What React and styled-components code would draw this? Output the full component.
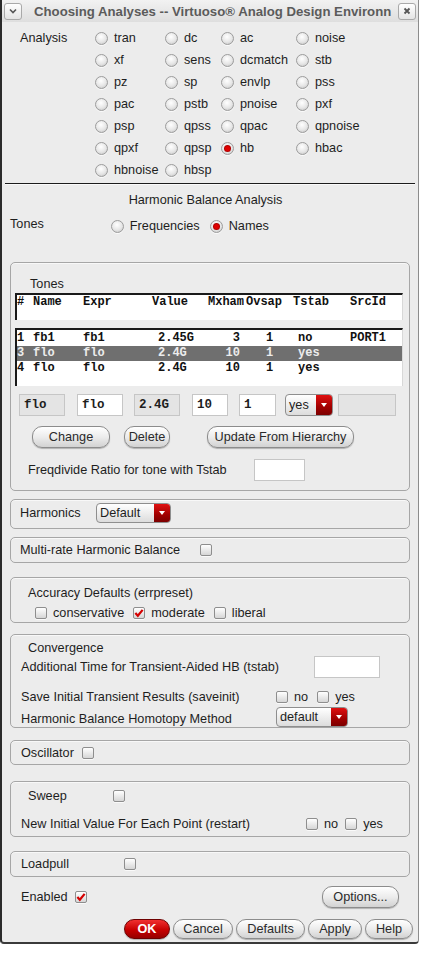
import React from 'react';
import styled, { createGlobalStyle } from 'styled-components';

const GlobalStyle = createGlobalStyle`
    html, body {
        margin: 0;
        padding: 0;
        background: #ffffff;
    }
    body {
        font-family: "Liberation Sans", Arial, sans-serif;
        font-size: 12.7px;
        color: #1e1e1e;
    }
`;

const Window = styled.div`
    width: 416px;
    border-left: 2px solid #2b2b2b;
    border-right: 1px solid #8c8c8c;
    border-bottom: 2px solid #3a3a3a;
    border-radius: 0 0 4px 4px;
    background: #ececec;
    padding-bottom: 3px;
    display: flex;
    flex-direction: column;
`;

const TitleBar = styled.div`
    height: 22px;
    display: flex;
    align-items: center;
    background: linear-gradient(#f2f2f2, #dedede);
`;

const TitleBtn = styled.div`
    width: 16px;
    height: 15px;
    margin: 0 2px;
    border: 1px solid #a9a9a9;
    border-radius: 3px;
    background: linear-gradient(#ffffff, #e4e4e4);
    display: flex;
    align-items: center;
    justify-content: center;
    flex: none;
`;

const TitleText = styled.div`
    flex: 1;
    margin-left: 10px;
    font-weight: bold;
    font-size: 13.2px;
    color: #5b5b5b;
    white-space: nowrap;
`;

const AnalysisGrid = styled.div`
    display: grid;
    grid-template-columns: 75px 70px 56px 75px 1fr;
    grid-auto-rows: 22px;
    align-items: center;
    padding: 5px 0 0 18px;
`;

const FieldLabel = styled.span`
    white-space: nowrap;
`;

const RadioItem = styled.label`
    display: flex;
    align-items: center;
    gap: 6px;
    white-space: nowrap;
`;

const Radio = styled.span`
    width: 11px;
    height: 11px;
    border-radius: 50%;
    border: 1px solid #9c9c9c;
    background: radial-gradient(circle at 45% 35%, #ffffff 0%, #e6e6e6 55%, #bcbcbc 100%);
    box-shadow: 0 1px 0 #fafafa;
    display: flex;
    align-items: center;
    justify-content: center;
    flex: none;
    &::after {
        content: '';
        display: ${p => (p.$on ? 'block' : 'none')};
        width: 5px;
        height: 5px;
        border-radius: 50%;
        background: #e00000;
        box-shadow: 0 0 0 1px #b00000;
    }
`;

const Separator = styled.div`
    margin: 2px 3px 0;
    height: 1px;
    background: #1c1c1c;
    box-shadow: 0 1px 0 #fafafa;
`;

const SectionTitle = styled.div`
    margin-top: 8px;
    line-height: 16px;
    text-align: center;
    padding-right: 9px;
`;

const ToneRow = styled.div`
    margin-top: 6px;
    height: 20px;
    display: flex;
    align-items: center;
    padding-left: 8px;
`;

const RadioGroup = styled.div`
    display: flex;
    align-items: center;
    gap: 10px;
    margin-left: ${p => p.$ml}px;
    padding-top: 4px;
`;

const Group = styled.div`
    margin: ${p => p.$mt}px 8px 0;
    border: 1px solid #a6a6a6;
    border-radius: 5px;
    box-shadow: inset 0 1px 0 #f8f8f8;
    padding: ${p => p.$pad};
    display: flex;
    flex-direction: column;
`;

const GroupTitle = styled.div`
    line-height: 16px;
    margin-left: ${p => p.$ml}px;
`;

const TableBox = styled.div`
    margin-top: ${p => p.$mt}px;
    height: ${p => p.$h}px;
    box-sizing: border-box;
    background: #ffffff;
    border-top: 2px solid #1a1a1a;
    border-left: 2px solid #1a1a1a;
    border-right: 1px solid #d8d8d8;
    padding-top: ${p => p.$pt}px;
    font-family: "Liberation Mono", "Courier New", monospace;
    font-weight: bold;
    font-size: 12px;
`;

const TableRow = styled.div`
    display: grid;
    grid-template-columns: 16px 50px 69px 56px 38px 47px 57px 1fr;
    height: 15px;
    line-height: 15px;
    background: ${p => (p.$sel ? '#6f6f6f' : 'transparent')};
    color: ${p => (p.$sel ? '#ececec' : '#111111')};
`;

const Cell = styled.span`
    padding-left: ${p => p.$pl || 0}px;
    padding-right: ${p => p.$pr || 0}px;
    text-align: ${p => (p.$right ? 'right' : 'left')};
    white-space: nowrap;
`;

const FieldRow = styled.div`
    margin-top: ${p => p.$mt}px;
    height: 22px;
    display: flex;
    align-items: center;
    padding-left: ${p => p.$pl || 0}px;
`;

const Field = styled.div`
    width: ${p => p.$w}px;
    height: 22px;
    margin-left: ${p => p.$ml || 0}px;
    box-sizing: border-box;
    border: 1px solid #c6c6c6;
    background: ${p => (p.$ro ? '#e4e4e4' : '#ffffff')};
    padding-left: 4px;
    line-height: 20px;
    font-family: "Liberation Mono", "Courier New", monospace;
    font-weight: bold;
    font-size: 12.5px;
    flex: none;
`;

const Select = styled.div`
    width: ${p => p.$w}px;
    height: ${p => p.$h || 20}px;
    margin-left: ${p => p.$ml || 0}px;
    box-sizing: border-box;
    border: 1px solid #8e8e8e;
    border-radius: 4px;
    background: linear-gradient(#ffffff, #dcdcdc);
    display: flex;
    overflow: hidden;
    flex: none;
`;

const SelectText = styled.span`
    flex: 1;
    padding: 1px 0 0 3px;
    line-height: 16px;
`;

const SelectArrow = styled.span`
    width: 16px;
    background: linear-gradient(#e01010, #a00000 60%, #7c0000);
    display: flex;
    align-items: center;
    justify-content: center;
    &::after {
        content: '';
        border-left: 3px solid transparent;
        border-right: 3px solid transparent;
        border-top: 4px solid #ffffff;
    }
`;

const Button = styled.button`
    width: ${p => p.$w}px;
    height: ${p => p.$h || 22}px;
    margin-left: ${p => p.$ml || 0}px;
    box-sizing: border-box;
    border: 1px solid ${p => (p.$primary ? '#6e0000' : '#8c8c8c')};
    border-radius: 10px;
    background: ${p => (p.$primary
        ? 'linear-gradient(#f03030, #c80000 55%, #960000)'
        : 'linear-gradient(#ffffff, #ececec 50%, #d2d2d2)')};
    box-shadow: 0 1px 1px rgba(0, 0, 0, 0.25);
    color: ${p => (p.$primary ? '#ffffff' : '#2a2a2a')};
    font-family: "Liberation Sans", Arial, sans-serif;
    font-weight: ${p => (p.$primary ? 'bold' : 'normal')};
    font-size: 12.7px;
    padding: 0;
    flex: none;
`;

const Row = styled.div`
    height: ${p => p.$h}px;
    margin-top: ${p => p.$mt || 0}px;
    display: flex;
    align-items: center;
    padding-left: ${p => p.$pl || 0}px;
`;

const LabelCell = styled.span`
    width: ${p => p.$w}px;
    flex: none;
    white-space: nowrap;
`;

const CheckList = styled.div`
    display: flex;
    align-items: center;
    gap: ${p => p.$gap || 9}px;
`;

const CheckItem = styled.label`
    display: flex;
    align-items: center;
    gap: 6px;
    white-space: nowrap;
`;

const Box = styled.span`
    width: 10px;
    height: 10px;
    border: 1px solid #8e8e8e;
    border-radius: 2px;
    background: linear-gradient(#ffffff, #d6d6d6);
    box-shadow: 0 1px 0 #fafafa;
    display: flex;
    align-items: center;
    justify-content: center;
    flex: none;
`;

const Footer = styled.div`
    margin-top: 9px;
    height: 22px;
    display: flex;
    align-items: center;
    padding: 0 19px 0 19px;
`;

const ButtonBar = styled.div`
    margin-top: 11px;
    display: flex;
    justify-content: flex-end;
    gap: 3px;
    padding-right: 5px;
`;

const Check = ({ on, label }) => (
    <CheckItem>
        <Box>
            {on && (
                <svg width="11" height="10" viewBox="0 0 11 10">
                    <path d="M1.5 5 L4.2 8 L9.5 1.5" fill="none" stroke="#d40000" strokeWidth="2.4" />
                </svg>
            )}
        </Box>
        {label}
    </CheckItem>
);

const analyses = [
    ['tran', 'dc', 'ac', 'noise'],
    ['xf', 'sens', 'dcmatch', 'stb'],
    ['pz', 'sp', 'envlp', 'pss'],
    ['pac', 'pstb', 'pnoise', 'pxf'],
    ['psp', 'qpss', 'qpac', 'qpnoise'],
    ['qpxf', 'qpsp', 'hb', 'hbac'],
    ['hbnoise', 'hbsp'],
];

const tones = [
    ['1', 'fb1', 'fb1', '2.45G', '3', '1', 'no', 'PORT1'],
    ['3', 'flo', 'flo', '2.4G', '10', '1', 'yes', ''],
    ['4', 'flo', 'flo', '2.4G', '10', '1', 'yes', ''],
];

const heads = ['#', 'Name', 'Expr', 'Value', 'Mxham', 'Ovsap', 'Tstab', 'SrcId'];

const App = () => {
    return (
        <>
            <GlobalStyle />
            <Window>
                <TitleBar>
                    <TitleBtn>
                        <svg width="10" height="8" viewBox="0 0 10 8">
                            <path d="M2 2.5 L5 5.5 L8 2.5" fill="none" stroke="#555" strokeWidth="1.6" />
                        </svg>
                    </TitleBtn>
                    <TitleText>Choosing Analyses -- Virtuoso® Analog Design Environn</TitleText>
                    <TitleBtn>
                        <svg width="10" height="10" viewBox="0 0 10 10">
                            <path d="M2.5 2.5 L7.5 7.5 M7.5 2.5 L2.5 7.5" stroke="#555" strokeWidth="1.8" />
                        </svg>
                    </TitleBtn>
                </TitleBar>

                <AnalysisGrid>
                    <FieldLabel>Analysis</FieldLabel>
                    {analyses.map((row, r) => row.map((name, c) => (
                        <RadioItem key={name} style={{ gridRow: r + 1, gridColumn: c + 2 }}>
                            <Radio $on={name === 'hb'} />
                            {name}
                        </RadioItem>
                    )))}
                </AnalysisGrid>
                <Separator />

                <SectionTitle>Harmonic Balance Analysis</SectionTitle>
                <ToneRow>
                    <FieldLabel>Tones</FieldLabel>
                    <RadioGroup $ml={67}>
                        <RadioItem><Radio />Frequencies</RadioItem>
                        <RadioItem><Radio $on />Names</RadioItem>
                    </RadioGroup>
                </ToneRow>

                <Group $mt={28} $pad="13px 6px 9px 4px">
                    <GroupTitle $ml={15}>Tones</GroupTitle>
                    <TableBox $mt={1} $h={27} $pt={0}>
                        <TableRow>
                            {heads.map(h => <Cell key={h}>{h}</Cell>)}
                        </TableRow>
                    </TableBox>
                    <TableBox $mt={8} $h={58} $pt={1}>
                        {tones.map((t, i) => (
                            <TableRow key={i} $sel={i === 1}>
                                <Cell>{t[0]}</Cell>
                                <Cell>{t[1]}</Cell>
                                <Cell>{t[2]}</Cell>
                                <Cell $pl={6}>{t[3]}</Cell>
                                <Cell $right $pr={6}>{t[4]}</Cell>
                                <Cell $pl={20}>{t[5]}</Cell>
                                <Cell $pl={5}>{t[6]}</Cell>
                                <Cell>{t[7]}</Cell>
                            </TableRow>
                        ))}
                    </TableBox>
                    <FieldRow $mt={8} $pl={4}>
                        <Field $w={46} $ro>flo</Field>
                        <Field $w={46} $ml={12}>flo</Field>
                        <Field $w={46} $ml={11} $ro>2.4G</Field>
                        <Field $w={36} $ml={12}>10</Field>
                        <Field $w={37} $ml={11}>1</Field>
                        <Select $w={48} $ml={9} $h={22}>
                            <SelectText style={{ paddingTop: 2 }}>yes</SelectText>
                            <SelectArrow />
                        </Select>
                        <Field $w={58} $ml={5} $ro />
                    </FieldRow>
                    <FieldRow $mt={10}>
                        <Button $w={78} $ml={17}>Change</Button>
                        <Button $w={46} $ml={14}>Delete</Button>
                        <Button $w={147} $ml={37}>Update From Hierarchy</Button>
                    </FieldRow>
                    <FieldRow $mt={11} $pl={13}>
                        <LabelCell $w={226}>Freqdivide Ratio for tone with Tstab</LabelCell>
                        <Field $w={51} />
                    </FieldRow>
                </Group>

                <Group $mt={8} $pad="3px 0 5px 9px">
                    <Row $h={20}>
                        <LabelCell $w={76}>Harmonics</LabelCell>
                        <Select $w={75}>
                            <SelectText>Default</SelectText>
                            <SelectArrow />
                        </Select>
                    </Row>
                </Group>

                <Group $mt={8} $pad="0 0 0 9px">
                    <Row $h={24}>
                        <LabelCell $w={180}>Multi-rate Harmonic Balance</LabelCell>
                        <Check />
                    </Row>
                </Group>

                <Group $mt={14} $pad="7px 0 1px 0">
                    <GroupTitle $ml={17}>Accuracy Defaults (errpreset)</GroupTitle>
                    <Row $h={16} $mt={4} $pl={24}>
                        <CheckList>
                            <Check label="conservative" />
                            <Check on label="moderate" />
                            <Check label="liberal" />
                        </CheckList>
                    </Row>
                </Group>

                <Group $mt={11} $pad="5px 0 0 10px">
                    <GroupTitle $ml={7}>Convergence</GroupTitle>
                    <Row $h={22}>
                        <LabelCell $w={293}>Additional Time for Transient-Aided HB (tstab)</LabelCell>
                        <Field $w={66} />
                    </Row>
                    <Row $h={20} $mt={9}>
                        <LabelCell $w={255}>Save Initial Transient Results (saveinit)</LabelCell>
                        <CheckList>
                            <Check label="no" />
                            <Check label="yes" />
                        </CheckList>
                    </Row>
                    <Row $h={20}>
                        <LabelCell $w={255} style={{ paddingTop: 3 }}>Harmonic Balance Homotopy Method</LabelCell>
                        <Select $w={72}>
                            <SelectText>default</SelectText>
                            <SelectArrow />
                        </Select>
                    </Row>
                </Group>

                <Group $mt={12} $pad="0 0 0 10px">
                    <Row $h={23}>
                        <LabelCell $w={61}>Oscillator</LabelCell>
                        <Check />
                    </Row>
                </Group>

                <Group $mt={16} $pad="6px 0 2px 10px">
                    <Row $h={16} $pl={7}>
                        <LabelCell $w={85}>Sweep</LabelCell>
                        <Check />
                    </Row>
                    <Row $h={20} $mt={10}>
                        <LabelCell $w={285}>New Initial Value For Each Point (restart)</LabelCell>
                        <CheckList $gap={7}>
                            <Check label="no" />
                            <Check label="yes" />
                        </CheckList>
                    </Row>
                </Group>

                <Group $mt={14} $pad="0 0 0 10px">
                    <Row $h={24}>
                        <LabelCell $w={103}>Loadpull</LabelCell>
                        <Check />
                    </Row>
                </Group>

                <Footer>
                    <LabelCell $w={54}>Enabled</LabelCell>
                    <Check on />
                    <Button $w={77} $h={22} $ml={235}>Options...</Button>
                </Footer>

                <ButtonBar>
                    <Button $w={46} $h={20} $primary>OK</Button>
                    <Button $w={60} $h={20}>Cancel</Button>
                    <Button $w={69} $h={20}>Defaults</Button>
                    <Button $w={54} $h={20}>Apply</Button>
                    <Button $w={48} $h={20}>Help</Button>
                </ButtonBar>
            </Window>
        </>
    );
};

export default App;
